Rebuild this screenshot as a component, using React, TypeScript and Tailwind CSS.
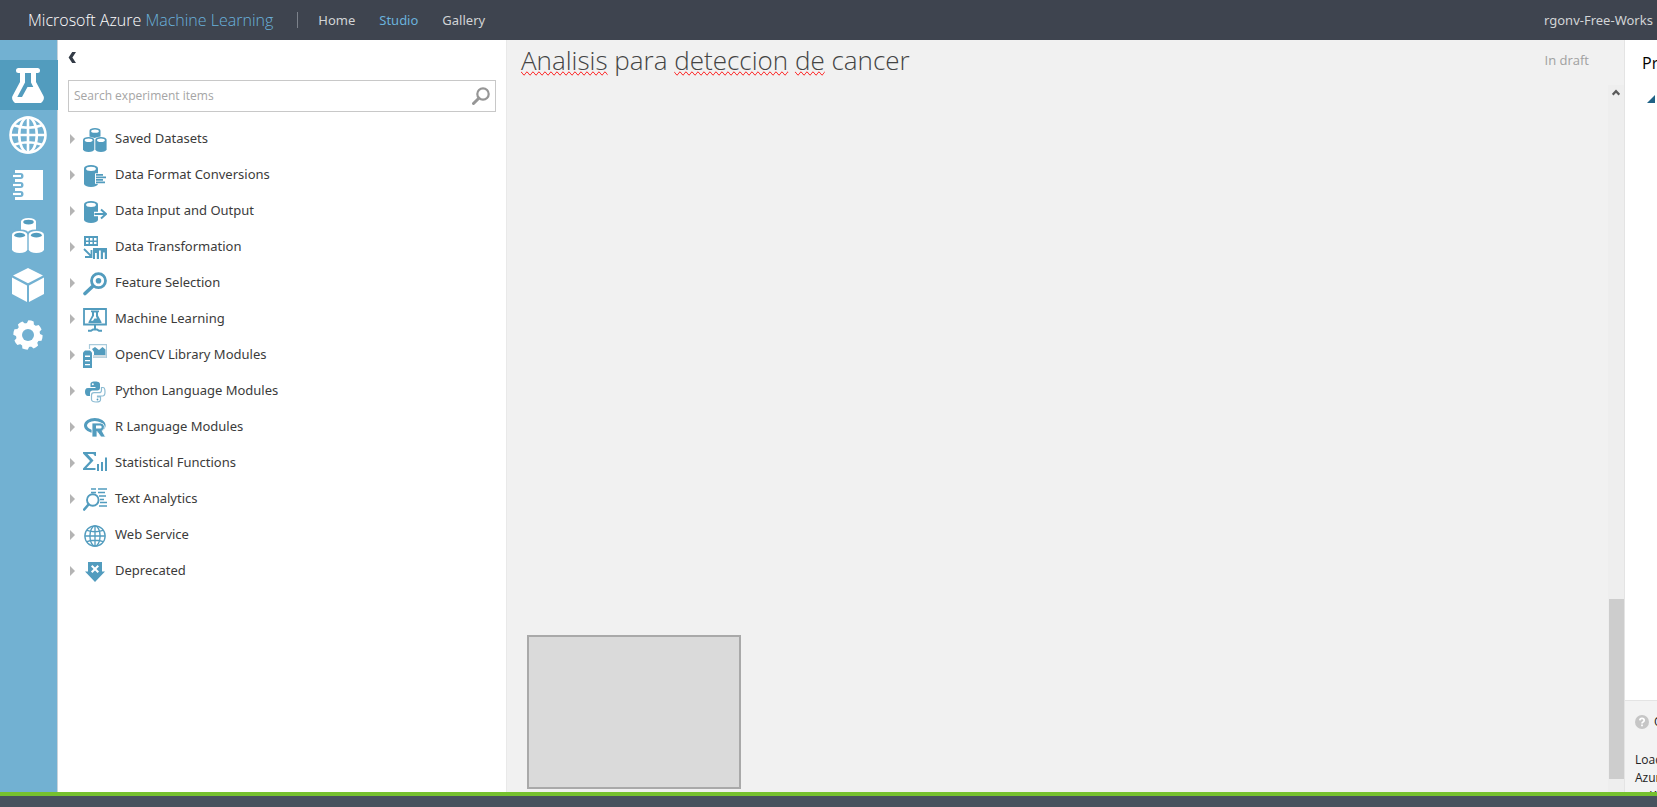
import type { ReactNode } from 'react';

const BLUE = '#529cbe';

function Jar({ x, y, w, h, fill, hole }: { x: number; y: number; w: number; h: number; fill: string; hole: string }) {
  const r = w / 2;
  const ry = w * 0.24;
  return (
    <g>
      <path
        d={`M${x} ${y + ry}A${r} ${ry} 0 0 1 ${x + w} ${y + ry}V${y + h - ry}A${r} ${ry} 0 0 1 ${x} ${y + h - ry}Z`}
        fill={fill}
      />
      <ellipse cx={x + r} cy={y + ry + 0.5} rx={r * 0.7} ry={ry * 0.65} fill={hole} />
    </g>
  );
}

function GlobeLines({ color, width }: { color: string; width: number }) {
  return (
    <g fill="none" stroke={color} strokeWidth={width}>
      <circle cx="19" cy="19" r="17.5" />
      <ellipse cx="19" cy="19" rx="8.8" ry="17.5" />
      <path d="M19 1.5v35M1.5 19h35M5 9.2q14 5 28 0M5 28.8q14-5 28 0" />
    </g>
  );
}

const railItems: { label: string; size: string; viewBox: string; art: ReactNode }[] = [
  {
    label: 'Experiments',
    size: 'w-8 h-[35px]',
    viewBox: '0 0 32 35',
    art: (
      <>
        <path
          d="M6.500 0h19a2.500 2.500 0 0 1 0 5h-1.500v9l7.500 14q1.200 3-1 5.500l-1.500 1.500h-26l-1.500-1.500q-2.200-2.500-1-5.500l7.500-14v-9h-1.500a2.500 2.500 0 0 1 0-5z"
          fill="#fff"
        />
        <path d="M13 5h6v9.500l2.300 4.500h-5.800l-5.500 10h-4.700l7.700-14.500z" fill={BLUE} />
      </>
    ),
  },
  { label: 'Web services', size: 'size-[38px]', viewBox: '0 0 38 38', art: <GlobeLines color="#fff" width={2.6} /> },
  {
    label: 'Notebooks',
    size: 'w-[30px] h-[30px]',
    viewBox: '0 0 30 30',
    art: (
      <>
        <path d="M2 0H30v30H2z" fill="#fff" />
        {[6, 15, 24].map((y) => (
          <g key={y}>
            <circle cx="7.500" cy={y} r="3" fill="#72b1d2" />
            <path d={`M0 ${y - 3}h7.500v6H0z`} fill="#72b1d2" />
            <path d={`M0 ${y}h8`} stroke="#fff" strokeWidth="2.200" />
          </g>
        ))}
      </>
    ),
  },
  {
    label: 'Datasets',
    size: 'w-8 h-[35px]',
    viewBox: '0 0 32 35',
    art: (
      <>
        <Jar x={9} y={0} w={15} h={16} fill="#fff" hole={BLUE} />
        <path d="M0 17q0-4.500 8-4.500t8 4q0-4 8-4t8 4.500" fill="#72b1d2" stroke="#72b1d2" strokeWidth="2" />
        <Jar x={0} y={13} w={15.3} h={22} fill="#fff" hole={BLUE} />
        <Jar x={16.7} y={13} w={15.3} h={22} fill="#fff" hole={BLUE} />
      </>
    ),
  },
  {
    label: 'Trained models',
    size: 'w-8 h-[34px]',
    viewBox: '0 0 32 34',
    art: <path d="M16 0 31 7.500 16 15.300 1 7.500zM0 9.500l15 8V34L0 26zM32 9.500l-15 8V34l15-8z" fill="#fff" />,
  },
  {
    label: 'Settings',
    size: 'size-[30px]',
    viewBox: '0 0 30 30',
    art: (
      <>
        <g fill="#fff">
          <circle cx="15" cy="15" r="12" />
          {[12, 57, 102, 147, 192, 237, 282, 327].map((a) => (
            <path key={a} d="M11.300 4 12.300 .6q2.700-.6 5.400 0L18.700 4z" transform={`rotate(${a} 15 15)`} />
          ))}
        </g>
        <circle cx="15" cy="15" r="6" fill="#72b1d2" />
      </>
    ),
  },
];

const categories: { label: string; art: ReactNode }[] = [
  {
    label: 'Saved Datasets',
    art: (
      <>
        <Jar x={6.5} y={0} w={11} h={12} fill={BLUE} hole="#fff" />
        <path d="M0 10q5-3 11.500 0q6.500-3 12.500 0v3H0z" fill="#fff" />
        <Jar x={0} y={9} w={11.3} h={15} fill={BLUE} hole="#fff" />
        <Jar x={12.3} y={9} w={11.3} h={15} fill={BLUE} hole="#fff" />
      </>
    ),
  },
  {
    label: 'Data Format Conversions',
    art: (
      <>
        <Jar x={1} y={1} w={14} h={22} fill={BLUE} hole="#fff" />
        <path d="M12 9.300H24v10.500H12z" fill="#fff" />
        <path d="M13 10.800h7M13 13.300h10M13 15.800h7M13 18.300h9" stroke={BLUE} strokeWidth="1.700" />
      </>
    ),
  },
  {
    label: 'Data Input and Output',
    art: (
      <>
        <Jar x={1} y={1} w={14} h={22} fill={BLUE} hole="#fff" />
        <path d="M11 14h10M17.500 9.500l5 4.500-5 4.500" fill="none" stroke="#fff" strokeWidth="4.500" />
        <path d="M11.500 14H23M18 9.500l5 4.500-5 4.500" fill="none" stroke={BLUE} strokeWidth="2" />
      </>
    ),
  },
  {
    label: 'Data Transformation',
    art: (
      <>
        <path d="M1 0h14v10H1z" fill={BLUE} />
        <path d="M3 2h2.500v2.500H3zM7 2h2.500v2.500H7zM11 2h2.500v2.500H11zM3 6h2.500v2H3zM7 6h2.500v2H7zM11 6h2.500v2H11z" fill="#fff" />
        <path d="M1 13l6.500 6.500M8.500 14v7H2" fill="none" stroke={BLUE} strokeWidth="1.800" />
        <path d="M10 12h14v11H10z" fill={BLUE} />
        <path d="M12 17h1.800v6H12zM16 14.500h1.800V23H16zM20 16.500h1.800V23H20z" fill="#fff" />
      </>
    ),
  },
  {
    label: 'Feature Selection',
    art: (
      <>
        <circle cx="15.500" cy="8.700" r="7" fill="none" stroke={BLUE} strokeWidth="2.800" />
        <circle cx="15.500" cy="8.700" r="2.800" fill={BLUE} />
        <path d="M9.500 14.500 2 21.500" stroke={BLUE} strokeWidth="3.600" strokeLinecap="round" />
      </>
    ),
  },
  {
    label: 'Machine Learning',
    art: (
      <>
        <path d="M1 1h22v15.500H1z" fill="none" stroke={BLUE} strokeWidth="1.800" />
        <path d="M8 2.500h8v1.700h-1v3.300l3.500 6.500v1H5.500v-1L9 7.500V4.200H8z" fill={BLUE} />
        <path d="M11 4.500h2v4l1 2h-2.500l-1.500 2.300H8l3-5z" fill="#fff" />
        <path d="M12 17v4.500M5 22.800h3l2-1.300h4l2 1.300h3" stroke={BLUE} strokeWidth="2" fill="none" />
      </>
    ),
  },
  {
    label: 'OpenCV Library Modules',
    art: (
      <>
        <path d="M6.500 5V.7h17v12.800H10" fill="none" stroke="#a9cbdc" strokeWidth="1.200" />
        <path d="M10 11h13v2.500H10z" fill="#cfdbe1" />
        <path d="M9 5l3-2 4 3L19.500 3 22.500 5.500V11H11V8z" fill={BLUE} />
        <path d="M2 6.500h5l2 2V24H0V8.500z" fill={BLUE} />
        <path d="M2 11.500h5V13H2zM2 16h5v1.300H2zM2 20h5v1.300H2z" fill="#fff" />
      </>
    ),
  },
  {
    label: 'Python Language Modules',
    art: (
      <>
        <path
          d="M12 1.500c-4 0-4.500 1.500-4.500 2.800V7H12.500v1H5C2.500 8 2 10 2 12s1 4 3 4h2v-3c0-1.500 1-2.500 2.500-2.500h5c1.300 0 2.500-1 2.500-2.500V4.300c0-1.500-1-2.800-5-2.800z"
          fill={BLUE}
        />
        <circle cx="9.800" cy="4.200" r="1" fill="#fff" />
        <path
          d="M18.500 7.500h1.500c1.500 0 2 2 2 4.500s-.5 4-2.500 4h-5v1h3v2.700c0 1.300-1.500 2.300-4.500 2.300s-4.500-1-4.500-2.500v-4.300c0-1.500 1-2.500 2.500-2.500h5c1.500 0 2.500-1 2.500-2.500z"
          fill="#fff"
          stroke="#8dbcd3"
          strokeWidth="1.200"
        />
        <circle cx="14.500" cy="19.500" r=".9" fill={BLUE} />
      </>
    ),
  },
  {
    label: 'R Language Modules',
    art: (
      <>
        <ellipse cx="11.800" cy="9.500" rx="9.300" ry="6" fill="none" stroke={BLUE} strokeWidth="3" />
        <path d="M9 7h8.500a4 4 0 0 1 1.500 7.700l3.500 6.300h-4.500L14 15.500V21H9z" fill={BLUE} stroke="#fff" strokeWidth=".8" />
        <path d="M13 9.500h4.200q1.500 0 1.500 1.500t-1.500 1.500H13z" fill="#fff" />
      </>
    ),
  },
  {
    label: 'Statistical Functions',
    art: (
      <>
        <path d="M0 0h13v4h-1.300q-.4-2-2.200-2H4.500l6 6.500-7 7.500h9v2H0v-1.500l7-7.500-7-7.500z" fill={BLUE} />
        <path d="M15 12v7M19 10v9M23 5.500V19" stroke={BLUE} strokeWidth="2" />
      </>
    ),
  },
  {
    label: 'Text Analytics',
    art: (
      <>
        <path d="M8 1h5M15 1h9M8 4.500h5M15 4.500h7M16 8h7M17 11.500h4M17 14.500h7M16 18h8" stroke={BLUE} strokeWidth="1.600" />
        <circle cx="9.800" cy="12" r="5.800" fill="#fff" stroke={BLUE} strokeWidth="1.900" />
        <path d="M5.500 16.500 1.200 21.500" stroke={BLUE} strokeWidth="2.600" strokeLinecap="round" />
      </>
    ),
  },
  {
    label: 'Web Service',
    art: (
      <g transform="translate(1 1) scale(.579)">
        <GlobeLines color={BLUE} width={2.3} />
      </g>
    ),
  },
  {
    label: 'Deprecated',
    art: (
      <>
        <path d="M5 2h14v9.500h3L12 22 2 11.500h3z" fill={BLUE} />
        <path d="M8.700 5.700 15.300 12.300M15.300 5.700 8.700 12.300" stroke="#fff" strokeWidth="2" />
      </>
    ),
  },
];

const squiggle = '[text-decoration-line:spelling-error]';

export default function App() {
  return (
    <div className="flex h-screen min-h-0 flex-col overflow-hidden bg-[#f1f1f1] font-['Open_Sans',sans-serif]">
      <header className="flex h-10 shrink-0 items-center justify-between overflow-hidden bg-[#3e444f] whitespace-nowrap">
        <div className="flex items-center pl-7">
          <div className="text-base font-light text-white">
            Microsoft Azure <span className="text-[#6ab2dc]">Machine Learning</span>
          </div>
          <div className="ml-6 h-4 w-px bg-[#7c828b]" />
          <nav className="ml-5 flex gap-6 pt-0.5 font-['Noto_Sans',sans-serif] text-[13px] text-[#d2d4d6]">
            <a href="#home">Home</a>
            <a href="#studio" className="text-[#6ab2dc]">
              Studio
            </a>
            <a href="#gallery">Gallery</a>
          </nav>
        </div>
        <div className="w-[113px] overflow-hidden pt-0.5 font-['Noto_Sans',sans-serif] text-[13px] text-[#d2d4d6]">
          rgonv-Free-Works
        </div>
      </header>

      <div className="flex min-h-0 flex-1">
        <nav className="flex w-[58px] shrink-0 flex-col border-r border-[#c9d3da] bg-[#72b1d2] pt-5">
          {railItems.map((item, i) => (
            <button
              key={item.label}
              type="button"
              aria-label={item.label}
              className={
                i === 0
                  ? '-mr-px flex h-[50px] items-center justify-center bg-[#529cbe] pr-0.5'
                  : 'flex h-[50px] items-center justify-center pr-0.5'
              }
            >
              <svg className={item.size} viewBox={item.viewBox} aria-hidden="true">
                {item.art}
              </svg>
            </button>
          ))}
        </nav>

        <aside className="flex w-[449px] shrink-0 flex-col border-r border-[#e9e9e9] bg-white px-2.5">
          <button type="button" aria-label="Collapse panel" className="mt-2 flex h-[18px] w-4 items-center">
            <svg className="h-[11px] w-2" viewBox="0 0 8 11" aria-hidden="true">
              <path d="M4.200 0H8L4.400 5.500 8 11H4.200L.6 5.500z" fill="#333b46" />
            </svg>
          </button>
          <label className="mt-3.5 mb-2 flex h-8 shrink-0 items-center border border-[#c8c8c8] px-[5px]">
            <input
              type="text"
              aria-label="Search experiment items"
              placeholder="Search experiment items"
              className="min-w-0 flex-1 text-xs outline-none placeholder:text-[#a5a5a5]"
            />
            <svg className="size-[18px]" viewBox="0 0 18 18" aria-hidden="true">
              <circle cx="11" cy="7" r="5.700" fill="none" stroke="#969696" strokeWidth="2.200" />
              <path d="M6.800 11.200 1.500 16.500" stroke="#969696" strokeWidth="3" strokeLinecap="round" />
            </svg>
          </label>
          <ul className="font-['Noto_Sans',sans-serif]">
            {categories.map((c) => (
              <li key={c.label}>
                <button type="button" className="flex h-9 w-full items-center pt-px text-left text-[13px] text-[#3b3b3b]">
                  <svg className="ml-0.5 h-[10px] w-[5px]" viewBox="0 0 5 10" aria-hidden="true">
                    <path d="M0 0 5 5 0 10z" fill="#b4b4b4" />
                  </svg>
                  <svg className="mt-0.5 ml-2 size-6" viewBox="0 0 24 24" aria-hidden="true">
                    {c.art}
                  </svg>
                  <span className="ml-2">{c.label}</span>
                </button>
              </li>
            ))}
          </ul>
        </aside>

        <main className="flex min-w-0 flex-1 flex-col">
          <div className="flex shrink-0 items-start justify-between pr-[35px] pl-[14px]">
            <h1 className="h-[45px] text-[26px] leading-10 font-light text-[#444]">
              <span className={squiggle}>Analisis</span> para <span className={squiggle}>deteccion</span>{' '}
              <span className={squiggle}>de</span> cancer
            </h1>
            <span className="text-[13px] leading-10 text-[#a0a0a0]">In draft</span>
          </div>
          <div className="flex min-h-0 flex-1">
            <div className="flex min-w-0 flex-1 items-end pb-[3px] pl-5">
              <div className="h-[154px] w-[214px] border-2 border-[#a9a9a9] bg-[#dadada]" />
            </div>
            <div className="flex w-4 flex-col items-center bg-[#eeeeee] pb-[13px]">
              <svg className="mt-1 h-[7px] w-2" viewBox="0 0 8 7" aria-hidden="true">
                <path d="M.7 5.700 4 2.200l3.300 3.500" fill="none" stroke="#5a5a5a" strokeWidth="2.200" />
              </svg>
              <div className="mt-auto h-[180px] w-[15px] bg-[#cdcdcd]" />
            </div>
          </div>
        </main>

        <aside className="flex w-[33px] shrink-0 flex-col overflow-hidden border-l border-[#e4e4e4] bg-white whitespace-nowrap">
          <h2 className="pt-[11px] pl-[17px] text-base leading-6 text-black">Pr</h2>
          <svg className="mt-5 ml-[22px] size-2 shrink-0" viewBox="0 0 8 8" aria-hidden="true">
            <path d="M8 0V8H0z" fill="#1f6286" />
          </svg>
          <div className="mt-auto h-[92px] overflow-hidden border-t border-[#e4e4e4] bg-[#f3f3f3] pl-2.5 text-xs leading-[18px] text-[#222]">
            <div className="flex items-center gap-[5px] pt-3">
              <svg className="size-[14px] shrink-0" viewBox="0 0 14 14" aria-hidden="true">
                <circle cx="7" cy="7" r="7" fill="#c6c6c6" />
                <path d="M4.800 5.400Q4.900 3.300 7 3.300T9.200 5.200Q9.200 6.300 8 7 7 7.500 7 8.600M7 9.600v1.700" fill="none" stroke="#fff" strokeWidth="1.700" />
              </svg>
              <span>Q</span>
            </div>
            <p className="mt-5">
              Load
              <br />
              Azur
            </p>
            <p className="pl-[15px]">W</p>
          </div>
        </aside>
      </div>

      <footer className="h-[15px] shrink-0 border-t-4 border-[#76c12f] bg-[#47525e]" />
    </div>
  );
}
